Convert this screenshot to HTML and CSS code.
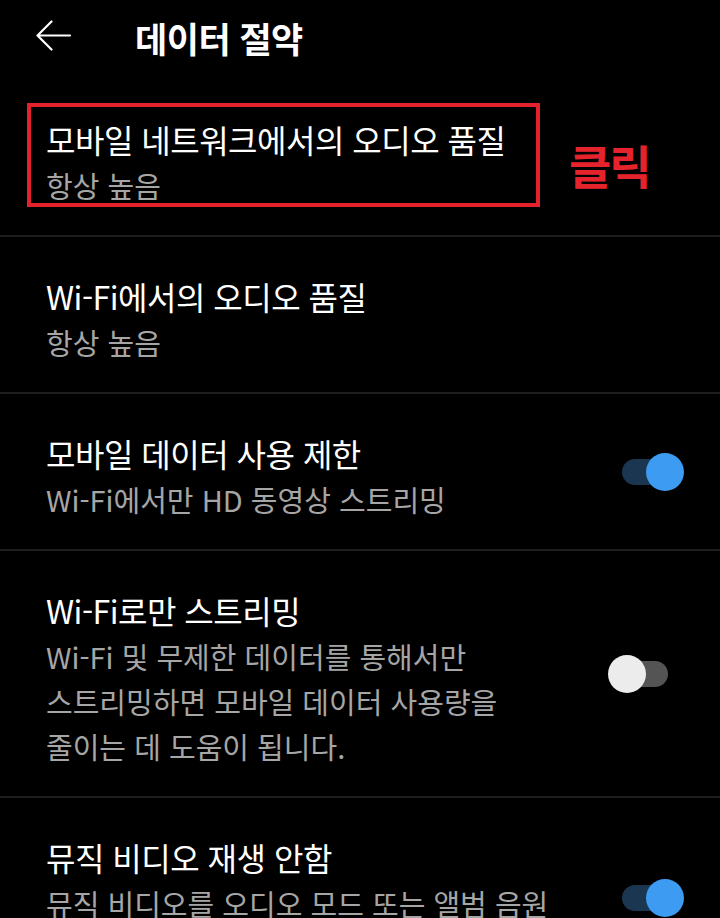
FILE: index.html
```html
<!DOCTYPE html>
<html lang="ko">
<head>
<meta charset="utf-8">
<link rel="stylesheet" href="styles.css">
</head>
<body>
<div class="screen">
  <header class="appbar">
    <svg class="back" width="36" height="32" viewBox="0 0 36 32"><path d="M1.5 15.5 H34 M15.5 1.5 L1.5 15.5 L15.5 29.5" fill="none" stroke="#fff" stroke-width="2.2" stroke-linecap="round" stroke-linejoin="round"/></svg>
    <h1 class="appbar-title">데이터 절약</h1>
  </header>

  <section class="row annotated">
    <div class="text">
      <div class="row-title">모바일 네트워크에서의 오디오 품질</div>
      <div class="row-sub">항상 높음</div>
    </div>
    <div class="highlight"></div>
    <div class="click-label">클릭</div>
  </section>

  <section class="row">
    <div class="text">
      <div class="row-title">Wi-Fi에서의 오디오 품질</div>
      <div class="row-sub">항상 높음</div>
    </div>
  </section>

  <section class="row">
    <div class="text">
      <div class="row-title">모바일 데이터 사용 제한</div>
      <div class="row-sub">Wi-Fi에서만 HD 동영상 스트리밍</div>
    </div>
    <div class="switch on"><span class="track"></span><span class="thumb"></span></div>
  </section>

  <section class="row">
    <div class="text">
      <div class="row-title">Wi-Fi로만 스트리밍</div>
      <div class="row-sub">Wi-Fi 및 무제한 데이터를 통해서만<br>스트리밍하면 모바일 데이터 사용량을<br>줄이는 데 도움이 됩니다.</div>
    </div>
    <div class="switch off"><span class="track"></span><span class="thumb"></span></div>
  </section>

  <section class="row">
    <div class="text">
      <div class="row-title">뮤직 비디오 재생 안함</div>
      <div class="row-sub">뮤직 비디오를 오디오 모드 또는 앨범 음원<br>으로 대체합니다.</div>
    </div>
    <div class="switch on"><span class="track"></span><span class="thumb"></span></div>
  </section>
</div>
</body>
</html>
```

FILE: styles.css
```css
html, body {
  margin: 0;
  padding: 0;
  background: #000;
}
body {
  font-family: "Noto Sans CJK KR", "Noto Sans", sans-serif;
  color: #fff;
}
.screen {
  width: 720px;
  height: 918px;
  overflow: hidden;
  background: #000;
}
.appbar {
  height: 80px;
  display: flex;
  align-items: center;
  padding-left: 36px;
  box-sizing: border-box;
}
.back {
  display: block;
  margin-bottom: 8px;
}
.appbar-title {
  margin: 0 0 4px 63px;
  font-size: 35px;
  font-weight: 700;
  letter-spacing: -0.5px;
  line-height: 40px;
  color: #fff;
}
.row {
  display: flex;
  align-items: center;
  padding: 35px 36px 27px 46px;
  border-bottom: 2px solid #1e1e1e;
}
.text {
  flex: 1;
  min-width: 0;
}
.row-title {
  font-size: 32px;
  letter-spacing: -0.5px;
  line-height: 48px;
  color: #fff;
  white-space: nowrap;
}
.row-sub {
  font-size: 29px;
  letter-spacing: 0;
  line-height: 45px;
  color: #a6a6a6;
  white-space: nowrap;
}
.annotated {
  position: relative;
}
.highlight {
  position: absolute;
  left: 27px;
  top: 23px;
  width: 513px;
  height: 104px;
  border: 4px solid #e3222b;
  box-sizing: border-box;
}
.click-label {
  position: absolute;
  left: 569px;
  top: 56px;
  font-size: 46px;
  font-weight: 700;
  letter-spacing: -2px;
  line-height: 56px;
  color: #e5232c;
}
.switch {
  position: relative;
  width: 76px;
  height: 38px;
  flex: none;
  margin-bottom: 8px;
}
.track {
  position: absolute;
  left: 14px;
  top: 6px;
  width: 46px;
  height: 26px;
  border-radius: 13px;
}
.thumb {
  position: absolute;
  top: 0;
  width: 38px;
  height: 38px;
  border-radius: 50%;
}
.switch.on .track { background: #1b3651; }
.switch.on .thumb { left: 38px; background: #3d9cf2; }
.switch.off .track { background: #545454; }
.switch.off .thumb { left: 0; background: #ececec; }
```
